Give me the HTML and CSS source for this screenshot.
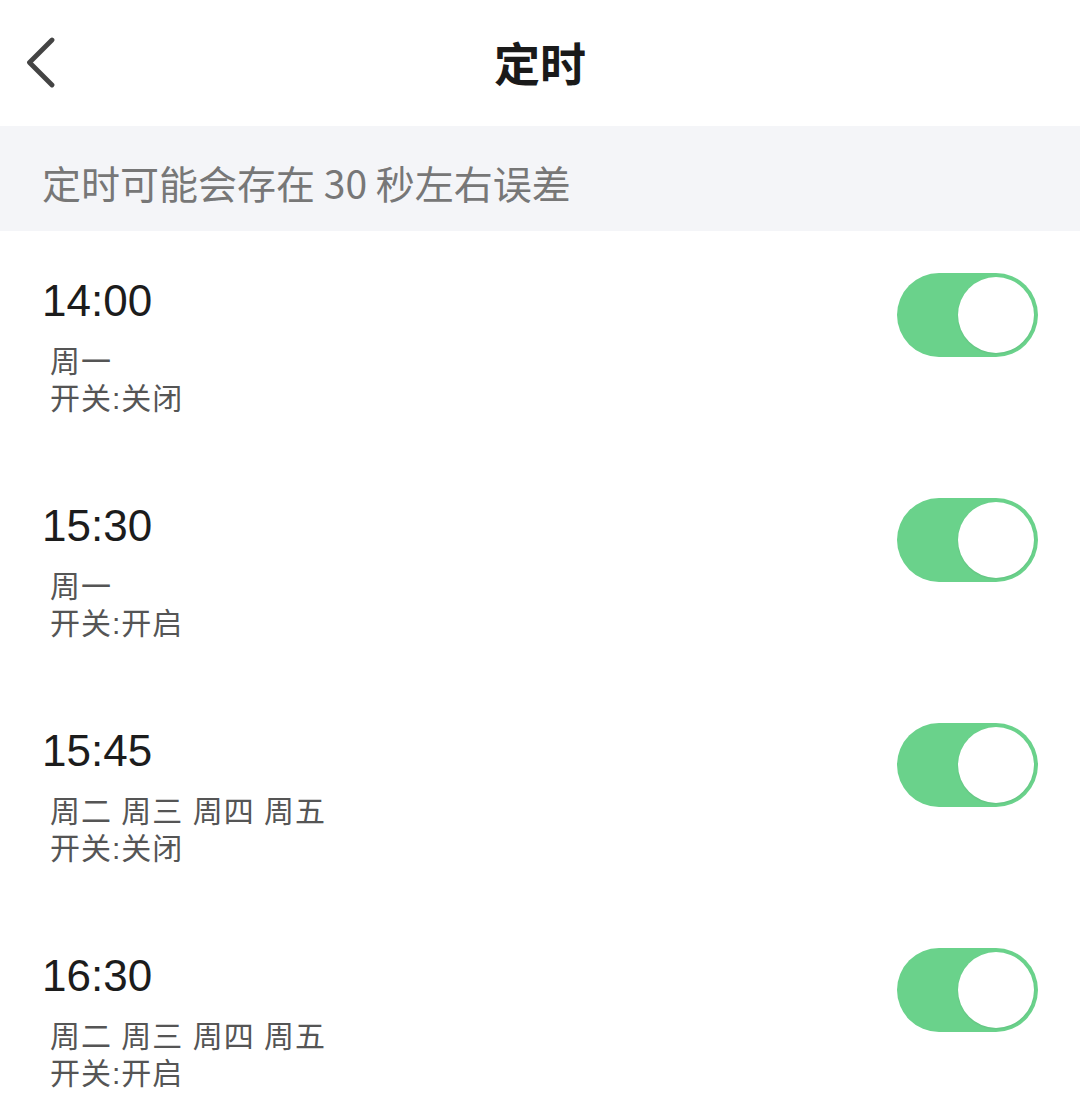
FILE: index.html
```html
<!DOCTYPE html>
<html lang="zh-CN">
<head>
<meta charset="utf-8">
<title>定时</title>
<link rel="stylesheet" href="styles.css">
</head>
<body>
<div class="page">
  <header class="nav">
    <div class="nav-left">
      <svg class="back" width="36" height="52" viewBox="0 0 36 52" aria-hidden="true">
        <path d="M30 4 L7.5 26.5 L30 49" fill="none" stroke="#444" stroke-width="4.8" stroke-linecap="round" stroke-linejoin="round"/>
      </svg>
    </div>
    <h1 class="title">定时</h1>
    <div class="nav-right"></div>
  </header>

  <div class="notice">定时可能会存在 30 秒左右误差</div>

  <ul class="list">
    <li class="row">
      <div class="info">
        <div class="time">14:00</div>
        <div class="meta">
          <div>周一</div>
          <div>开关:关闭</div>
        </div>
      </div>
      <span class="switch"><span class="knob"></span></span>
    </li>
    <li class="row">
      <div class="info">
        <div class="time">15:30</div>
        <div class="meta">
          <div>周一</div>
          <div>开关:开启</div>
        </div>
      </div>
      <span class="switch"><span class="knob"></span></span>
    </li>
    <li class="row">
      <div class="info">
        <div class="time">15:45</div>
        <div class="meta">
          <div>周二 周三 周四 周五</div>
          <div>开关:关闭</div>
        </div>
      </div>
      <span class="switch"><span class="knob"></span></span>
    </li>
    <li class="row">
      <div class="info">
        <div class="time">16:30</div>
        <div class="meta">
          <div>周二 周三 周四 周五</div>
          <div>开关:开启</div>
        </div>
      </div>
      <span class="switch"><span class="knob"></span></span>
    </li>
  </ul>
</div>
</body>
</html>
```

FILE: styles.css
```css
* {
  box-sizing: border-box;
}

html, body {
  margin: 0;
  padding: 0;
  background: #ffffff;
}

body {
  font-family: "Noto Sans CJK SC", "Noto Sans", sans-serif;
  color: #1c1c1c;
}

.page {
  width: 1080px;
  height: 1108px;
  overflow: hidden;
}

.nav {
  height: 126px;
  display: grid;
  grid-template-columns: 1fr auto 1fr;
  align-items: center;
}

.nav-left {
  padding-left: 22px;
  display: flex;
  align-items: center;
  padding-bottom: 2px;
}

.back {
  display: block;
}

.title {
  margin: 0;
  font-size: 46px;
  font-weight: 700;
  line-height: 56px;
  color: #1a1a1a;
  padding-bottom: 4px;
}

.notice {
  height: 105px;
  background: #f4f5f8;
  display: flex;
  align-items: center;
  padding-left: 42px;
  padding-top: 6px;
  font-size: 39px;
  color: #777777;
}

.list {
  list-style: none;
  margin: 0;
  padding: 0;
}

.row {
  display: flex;
  justify-content: space-between;
  align-items: flex-start;
  padding: 45px 42px 39px 42px;
}

.time {
  font-family: "Liberation Sans", "Noto Sans CJK SC", sans-serif;
  font-size: 44px;
  line-height: 50px;
  color: #1c1c1c;
}

.meta {
  margin-top: 17px;
  padding-left: 8px;
  font-family: "Liberation Sans", "Noto Sans CJK SC", sans-serif;
  font-size: 30px;
  line-height: 37px;
  letter-spacing: 1px;
  color: #555555;
}

.switch {
  margin-top: -3px;
  width: 141px;
  height: 84px;
  border-radius: 42px;
  background: #6ad28b;
  display: flex;
  align-items: center;
  justify-content: flex-end;
  padding-right: 4px;
}

.knob {
  width: 76px;
  height: 76px;
  border-radius: 50%;
  background: #ffffff;
  box-shadow: 0 1px 2px rgba(0, 0, 0, 0.08);
}
```
